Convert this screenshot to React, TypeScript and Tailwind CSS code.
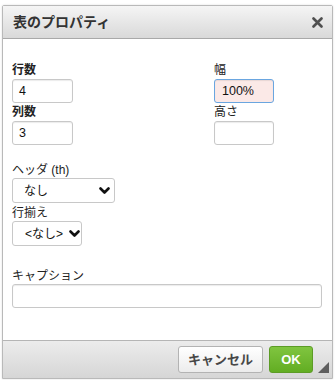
import React from "react";

const font = { fontFamily: '"Liberation Sans", "Noto Sans CJK JP", sans-serif' };

function Chevron() {
    return (
        <svg width="11" height="8" viewBox="0 0 11 8" className="shrink-0">
            <path d="M1.5 1.5 L5.5 5.5 L9.5 1.5" fill="none" stroke="#111" strokeWidth="2.6" strokeLinecap="round" strokeLinejoin="round" />
        </svg>
    );
}

function Field({ label, bold, value, pink, width }: { label: string; bold?: boolean; value?: string; pink?: boolean; width: string }) {
    return (
        <div className="flex flex-col">
            <label className={`text-[12px] leading-[14px] text-[#222] ${bold ? "font-bold" : ""}`}>{label}</label>
            <div
                className={`mt-[2px] h-[24px] ${width} rounded-[3px] border px-[6px] text-[12.5px] leading-[22px] text-[#111] shadow-[inset_0_1px_1px_rgba(0,0,0,0.08)] ${pink ? "border-[#6aa6e0] bg-[#fbe9e7] px-[7px]" : "border-[#c8c8c8] bg-white"}`}
            >
                {value}
            </div>
        </div>
    );
}

function Select({ value, width, pad }: { value: string; width: string; pad: string }) {
    return (
        <div className={`mt-[1px] flex h-[25px] ${width} items-center rounded-[3px] border border-[#c8c8c8] bg-white text-[12px] text-[#111] ${pad}`}>
            <span className="flex-1 whitespace-nowrap">{value}</span>
            <Chevron />
        </div>
    );
}

export default function App() {
    return (
        <div className="h-[380px] w-[336px] overflow-hidden bg-white pl-[2px] pt-[5px]" style={font}>
            <div className="flex h-[374px] w-[331px] flex-col rounded-t-[2px] border border-[#b9b9b9] shadow-[0_0_2px_rgba(0,0,0,0.15)]">
                {/* header */}
                <div className="flex h-[33px] items-center justify-between border-b border-[#a9a9a9] bg-gradient-to-b from-[#f5f5f5] to-[#d9d9d9] pl-[10px] pr-[9px]">
                    <span className="text-[14px] font-bold text-[#333]">表のプロパティ</span>
                    <svg width="11" height="11" viewBox="0 0 11 11">
                        <path d="M1.5 1.5 L9.5 9.5 M9.5 1.5 L1.5 9.5" stroke="#4f4f4f" strokeWidth="2.6" strokeLinecap="round" />
                    </svg>
                </div>

                {/* body */}
                <div className="flex-1 bg-white pl-[9px] pt-[24px]">
                    <div className="flex">
                        <div className="flex w-[202px] flex-col gap-[2px]">
                            <Field label="行数" bold value="4" width="w-[61px]" />
                            <Field label="列数" bold value="3" width="w-[61px]" />
                        </div>
                        <div className="flex flex-col gap-[2px]">
                            <Field label="幅" value="100%" pink width="w-[60px]" />
                            <Field label="高さ" width="w-[60px]" />
                        </div>
                    </div>

                    <div className="mt-[18px] flex flex-col">
                        <label className="text-[12px] leading-[14px] text-[#222]">ヘッダ (th)</label>
                        <Select value="なし" width="w-[103px]" pad="pl-[11px] pr-[4px]" />
                        <label className="mt-[3px] text-[12px] leading-[14px] text-[#222]">行揃え</label>
                        <Select value="<なし>" width="w-[70px]" pad="pl-[12px] pr-[1px]" />
                    </div>

                    <div className="mt-[23px] flex flex-col">
                        <label className="text-[12px] leading-[14px] text-[#222]">キャプション</label>
                        <div className="mt-[1px] h-[24px] w-[310px] rounded-[3px] border border-[#c8c8c8] bg-white shadow-[inset_0_1px_1px_rgba(0,0,0,0.08)]" />
                    </div>
                </div>

                {/* footer */}
                <div className="relative flex h-[38px] items-start justify-end gap-[6px] border-t border-[#b5b5b5] bg-gradient-to-b from-[#ececec] to-[#d6d6d6] pr-[19px] pt-[5px]">
                    <button className="h-[27px] w-[85px] rounded-[3px] border border-[#b3b3b3] bg-gradient-to-b from-white to-[#ececec] text-[13px] font-bold text-[#474747]">
                        キャンセル
                    </button>
                    <button className="h-[27px] w-[44px] rounded-[3px] border border-[#5c9c25] bg-gradient-to-b from-[#80c53f] to-[#62ad22] text-[13px] font-bold text-white">
                        OK
                    </button>
                    <svg className="absolute bottom-[5px] right-[3px]" width="11" height="11" viewBox="0 0 11 11">
                        <path d="M11 0 L11 11 L0 11 Z" fill="#5e5e5e" />
                    </svg>
                </div>
            </div>
        </div>
    );
}
